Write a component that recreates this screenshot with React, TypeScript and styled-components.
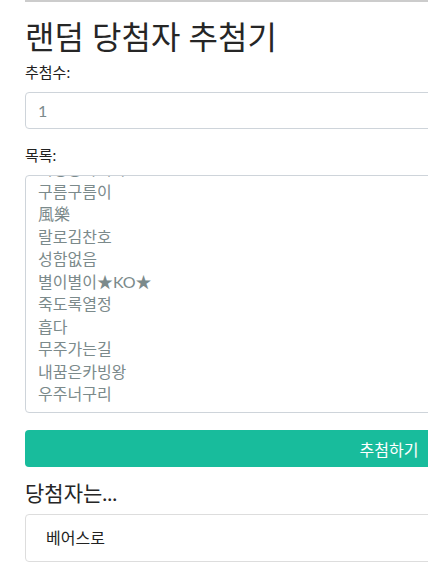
import React, { useEffect, useRef } from "react";
import styled, { createGlobalStyle } from "styled-components";

const Global = createGlobalStyle`
  html, body { margin: 0; padding: 0; overflow: hidden; background: #fff; }
  body {
    font-family: Lato, "Noto Sans CJK KR", sans-serif;
    color: #212529;
  }
  * { box-sizing: border-box; }
`;

const Page = styled.div`
  width: 753px;
  padding-left: 25px;
`;

const TopRule = styled.div`
  height: 2px;
  background: #cccccc;
`;

const Title = styled.h1`
  margin: 16px 0 6px;
  font-size: 32px;
  font-weight: 400;
  line-height: 38px;
  color: #262626;
`;

const Label = styled.label`
  display: block;
  font-size: 15px;
  line-height: 21px;
  margin-bottom: 9px;
  color: #222;
`;

const Field = styled.div`
  margin-bottom: 16px;
`;

const Input = styled.input`
  display: block;
  width: 100%;
  height: 37px;
  padding: 6px 12px;
  font-family: inherit;
  font-size: 16px;
  color: #7b8a8b;
  border: 1px solid #ced4da;
  border-radius: 4px;
  outline: none;
  background: #fff;
`;

const TextArea = styled.textarea`
  display: block;
  width: 100%;
  height: 238px;
  padding: 6px 12px;
  font-family: inherit;
  font-size: 16px;
  line-height: 22.5px;
  color: #7b8a8b;
  border: 1px solid #ced4da;
  border-radius: 4px;
  resize: none;
  outline: none;
  overflow: hidden;
`;

const Button = styled.button`
  display: block;
  width: 100%;
  height: 37px;
  margin-top: 17px;
  border: none;
  border-radius: 4px;
  background: #18bc9c;
  color: #fff;
  font-family: inherit;
  font-size: 16px;
  cursor: pointer;
`;

const SubTitle = styled.h3`
  margin: 14px 0 9px;
  font-size: 21px;
  font-weight: 400;
  line-height: 24px;
  color: #262626;
`;

const ResultBox = styled.div`
  border: 1px solid #dddddd;
  border-radius: 4px;
  padding: 12px 20px;
  font-size: 16px;
  line-height: 22px;
  color: #222;
`;

const names = [
  "이정용사이다",
  "구름구름이",
  "風樂",
  "랄로김찬호",
  "성함없음",
  "별이별이★KO★",
  "죽도록열정",
  "흡다",
  "무주가는길",
  "내꿈은카빙왕",
  "우주너구리",
];

export default function App() {
  const ref = useRef<HTMLTextAreaElement>(null);
  useEffect(() => {
    if (ref.current) ref.current.scrollTop = ref.current.scrollHeight;
  }, []);
  return (
    <Page>
      <Global />
      <TopRule />
      <Title>랜덤 당첨자 추첨기</Title>
      <Field>
        <Label>추첨수:</Label>
        <Input defaultValue="1" />
      </Field>
      <Field>
        <Label>목록:</Label>
        <TextArea ref={ref} defaultValue={names.join("\n")} />
      </Field>
      <Button>추첨하기</Button>
      <SubTitle>당첨자는...</SubTitle>
      <ResultBox>베어스로</ResultBox>
    </Page>
  );
}
